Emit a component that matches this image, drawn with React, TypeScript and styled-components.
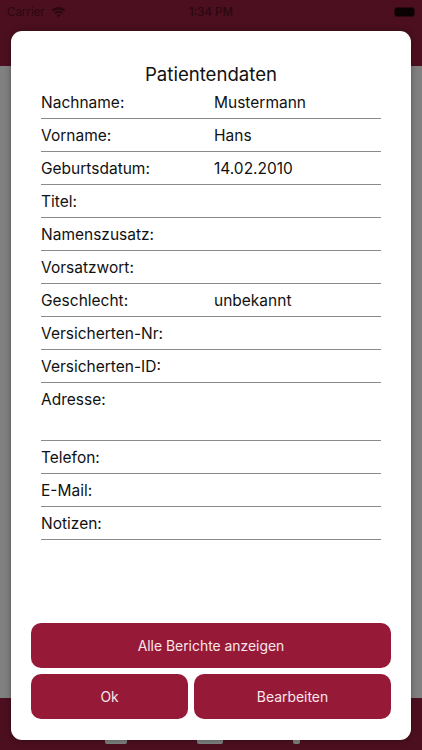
import React from "react";
import styled, { createGlobalStyle } from "styled-components";

const Global = createGlobalStyle`
  html, body { margin: 0; padding: 0; width: 422px; height: 750px; overflow: hidden; background: #808080; }
  * { box-sizing: border-box; }
  #root { width: 422px; height: 750px; }
`;

const Screen = styled.div`
  position: relative;
  width: 422px;
  height: 750px;
  display: flex;
  flex-direction: column;
  font-family: Inter, "Liberation Sans", sans-serif;
  background: #808080;
`;

const NavBar = styled.header`
  height: 66px;
  background: #4c0f1f;
  color: #2a0811;
`;

const StatusBar = styled.div`
  height: 24px;
  padding: 0 7px;
  display: flex;
  align-items: center;
  justify-content: space-between;
  font-size: 11.5px;
  line-height: 24px;
`;

const StatusLeft = styled.div`
  display: flex;
  align-items: center;
  gap: 6px;
  width: 80px;
`;

const StatusTime = styled.div`
  font-weight: 500;
  font-size: 11.5px;
`;

const StatusRight = styled.div`
  width: 80px;
  display: flex;
  justify-content: flex-end;
  padding-right: 1px;
`;

const Battery = styled.div`
  width: 19px;
  height: 8px;
  border-radius: 2.5px;
  background: #0b0204;
  box-shadow: 0 0 0 1px #2a0811;
`;

const Content = styled.main`
  flex: 1;
  background: #808080;
`;

const TabBar = styled.footer`
  height: 52px;
  background: #4c0f1f;
  display: flex;
  gap: 70px;
  padding-left: 105px;
`;

const TabStub = styled.div<{ $w: number }>`
  width: ${(p) => p.$w}px;
  height: 4px;
  margin-top: 42px;
  background: #7d8280;
  border-radius: 0 0 2px 2px;
`;

const Modal = styled.section`
  position: absolute;
  left: 11px;
  top: 31px;
  width: 400px;
  height: 709px;
  background: #fff;
  border-radius: 11px;
  box-shadow: 0 0 6px rgba(0, 0, 0, 0.35);
  display: flex;
  flex-direction: column;
  padding: 31px 20px 21px;
`;

const Title = styled.h1`
  margin: 0;
  height: 24px;
  font-size: 18.6px;
  line-height: 24px;
  font-weight: 400;
  text-align: center;
  color: #111;
`;

const Table = styled.div`
  padding: 0 10px;
  flex: 1;
`;

const Row = styled.div<{ $tall?: boolean }>`
  height: ${(p) => (p.$tall ? 58 : 33)}px;
  border-bottom: 1px solid #8a8a8a;
  display: flex;
  align-items: flex-start;
  font-size: 15.5px;
  line-height: 20px;
  padding-top: 6.5px;
  color: #111;
`;

const Label = styled.span`
  width: 173px;
  flex: none;
`;

const Value = styled.span``;

const Actions = styled.div`
  display: flex;
  flex-direction: column;
  gap: 6px;
`;

const ActionRow = styled.div`
  display: grid;
  grid-template-columns: 157px 197px;
  gap: 6px;
`;

const Action = styled.button`
  height: 45px;
  border: none;
  border-radius: 10px;
  background: #961a38;
  color: #f8e6ea;
  font: 400 13.9px Inter, "Liberation Sans", sans-serif;
  padding: 0;
`;

const rows: [string, string, boolean?][] = [
  ["Nachname:", "Mustermann"],
  ["Vorname:", "Hans"],
  ["Geburtsdatum:", "14.02.2010"],
  ["Titel:", ""],
  ["Namenszusatz:", ""],
  ["Vorsatzwort:", ""],
  ["Geschlecht:", "unbekannt"],
  ["Versicherten-Nr:", ""],
  ["Versicherten-ID:", ""],
  ["Adresse:", "", true],
  ["Telefon:", ""],
  ["E-Mail:", ""],
  ["Notizen:", ""],
];

export default function App() {
  return (
    <Screen>
      <Global />
      <NavBar>
        <StatusBar>
          <StatusLeft>
            Carrier
            <svg width="15" height="11" viewBox="0 0 16 12" aria-hidden="true">
              <path d="M8 2.600c2.200 0 4.200.8 5.700 2.200l1.700-1.800A10.800 10.800 0 0 0 8 0 10.800 10.800 0 0 0 .6 3l1.700 1.800A8.300 8.300 0 0 1 8 2.600z" fill="#2a0811" />
              <path d="M8 6.400c1.200 0 2.200.4 3 1.100l1.700-1.800A7 7 0 0 0 8 3.800a7 7 0 0 0-4.700 1.900L5 7.500c.8-.7 1.800-1.100 3-1.100z" fill="#2a0811" />
              <path d="M8 8c-.8 0-1.500.3-2 .8L8 11.500l2-2.700c-.5-.5-1.200-.8-2-.8z" fill="#2a0811" />
            </svg>
          </StatusLeft>
          <StatusTime>1:34 PM</StatusTime>
          <StatusRight>
            <Battery />
          </StatusRight>
        </StatusBar>
      </NavBar>
      <Content />
      <TabBar>
        <TabStub $w={22} />
        <TabStub $w={26} />
        <TabStub $w={7} />
      </TabBar>
      <Modal>
        <Title>Patientendaten</Title>
        <Table>
          {rows.map(([label, value, tall]) => (
            <Row key={label} $tall={tall}>
              <Label>{label}</Label>
              <Value>{value}</Value>
            </Row>
          ))}
        </Table>
        <Actions>
          <Action>Alle Berichte anzeigen</Action>
          <ActionRow>
            <Action>Ok</Action>
            <Action>Bearbeiten</Action>
          </ActionRow>
        </Actions>
      </Modal>
    </Screen>
  );
}
